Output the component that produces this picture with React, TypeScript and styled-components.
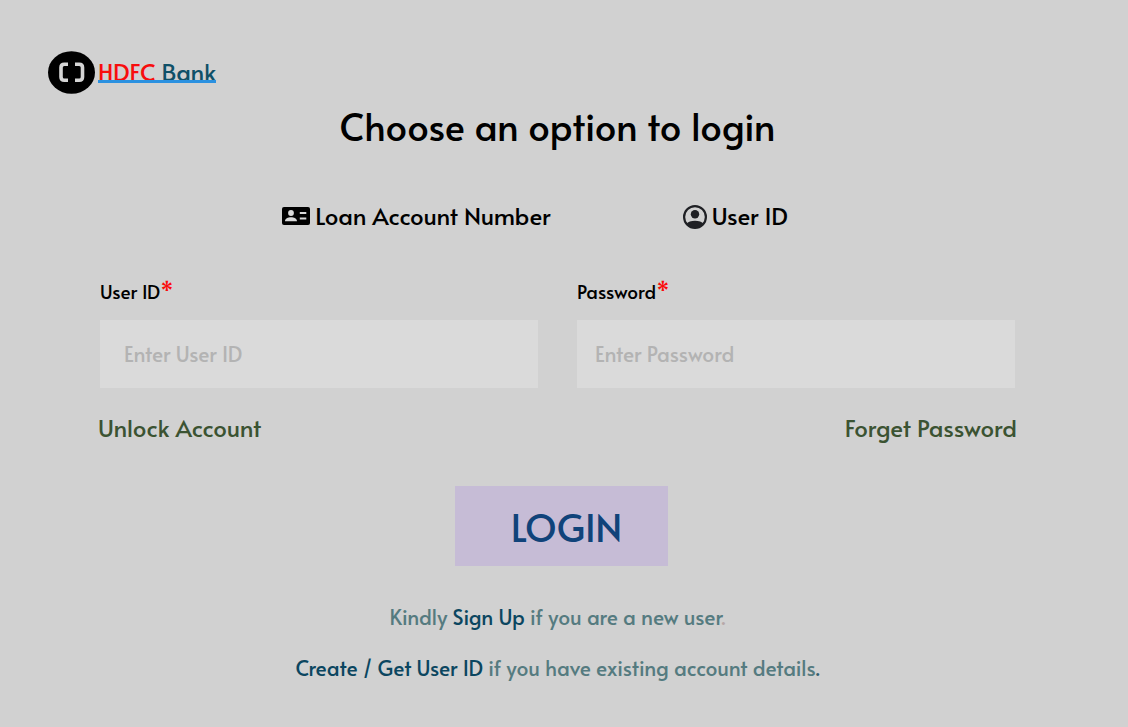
import React from "react";
import styled, { createGlobalStyle } from "styled-components";

const GlobalStyle = createGlobalStyle`
  *, *::before, *::after { box-sizing: border-box; }
  body {
    margin: 0;
    background: #d1d1d1;
    color: #000;
    font-family: Alata, Lato, "Open Sans", sans-serif;
    font-weight: 500;
  }
`;

const Page = styled.main`
  min-height: 100vh;
  padding: 48px 48px 32px;
`;

const Brand = styled.a`
  display: inline-flex;
  align-items: center;
  gap: 3px;
  height: 48px;
  color: #0f5068;
  font-size: 24px;
  line-height: 22px;
  text-decoration: none;
`;

const BrandName = styled.span`
  position: relative;
  &::after {
    content: "";
    position: absolute;
    right: 0;
    bottom: 0;
    left: 0;
    height: 3px;
    background: #2b91e0;
  }
`;

const BrandAccent = styled.span`
  color: #f80d0d;
`;

const Panel = styled.section`
  padding: 0 65px 0 52px;
`;

const Title = styled.h1`
  margin: 4px 0 0;
  font-size: 38px;
  line-height: 48px;
  font-weight: 500;
  text-align: center;
`;

const Options = styled.div`
  display: flex;
  justify-content: center;
  gap: 132px;
  margin-top: 50px;
  padding-right: 45px;
`;

const Option = styled.button`
  display: flex;
  align-items: center;
  gap: 5px;
  padding: 0;
  border: 0;
  background: none;
  color: #000;
  font: inherit;
  font-size: 24px;
  line-height: 32px;
  cursor: pointer;
`;

const Fields = styled.div`
  display: grid;
  grid-template-columns: 1fr 1fr;
  gap: 39px;
  margin-top: 47px;
`;

const Label = styled.label`
  display: block;
  height: 24px;
  font-size: 19px;
  line-height: 24px;
`;

const Required = styled.span`
  color: #fb0a0a;
  font-size: 21px;
  line-height: 20px;
`;

const Input = styled.input<{ $inset: number }>`
  display: block;
  width: 100%;
  height: 68px;
  margin-top: 17px;
  padding: 0 ${({ $inset }) => $inset}px;
  border: 0;
  border-radius: 0;
  background: #dadada;
  color: #000;
  font: inherit;
  font-size: 21px;
  &::placeholder { color: #b3b3b3; opacity: 1; }
`;

const HelpLinks = styled.nav`
  display: flex;
  justify-content: space-between;
  margin: 24px -2px 0;
`;

const HelpLink = styled.a`
  color: #3b5332;
  font-size: 24px;
  line-height: 32px;
  text-decoration: none;
`;

const Actions = styled.div`
  display: flex;
  justify-content: center;
  margin-top: 42px;
  padding-left: 8px;
`;

const LoginButton = styled.button`
  width: 213px;
  height: 80px;
  padding: 3px 0 0 10px;
  border: 0;
  background: #c6bcd6;
  color: #10437a;
  font: inherit;
  font-size: 38px;
  line-height: 48px;
  cursor: pointer;
`;

const Notes = styled.div`
  display: grid;
  gap: 19px;
  margin-top: 35px;
`;

const Note = styled.p`
  margin: 0;
  color: #557b80;
  font-size: 21px;
  line-height: 32px;
  text-align: center;
`;

const NoteLink = styled.a`
  color: #0b4660;
  text-decoration: none;
`;

const FullStop = styled.span<{ $color: string }>`
  color: ${({ $color }) => $color};
`;

const BrandIcon = () => (
  <svg width="47" height="43" viewBox="0 0 47 43" aria-hidden="true">
    <ellipse cx="23.5" cy="21.5" rx="23.5" ry="21.3" />
    <path d="M20 13.200h-3.700q-3.300 0-3.300 3.300v9.500q0 3.300 3.300 3.300h3.700M27 13.200h4.200q3.300 0 3.300 3.300v9.500q0 3.300-3.300 3.300H27" fill="none" stroke="#d5d5d5" strokeWidth="3.600" />
  </svg>
);

const CardIcon = () => (
  <svg width="28" height="20" viewBox="0 0 28 20" aria-hidden="true">
    <rect y="1" width="28" height="18" rx="2" />
    <g fill="#d9d9d9">
      <circle cx="9" cy="7" r="2.900" />
      <path d="M3 15.200c0-5.400 12-5.400 12 0zM17.800 5.900h6.500v2h-6.500zM17.800 11.500h6.500v2h-6.500z" />
    </g>
  </svg>
);

const UserIcon = () => (
  <svg width="24" height="26" viewBox="0 -2 24 26" fill="#1f2024" aria-hidden="true">
    <circle cx="12" cy="12" r="10.900" fill="none" stroke="#1f2024" strokeWidth="2.200" />
    <circle cx="12" cy="9.200" r="4.200" />
    <path d="M3.500 19C6 14.600 18 14.600 20.500 19 16 24.500 8 24.500 3.500 19z" />
  </svg>
);

export default function App() {
  return (
    <>
      <GlobalStyle />
      <Page>
        <Brand href="#">
          <BrandIcon />
          <BrandName><BrandAccent>HDFC</BrandAccent> Bank</BrandName>
        </Brand>
        <Panel>
          <Title>Choose an option to login</Title>
          <Options>
            <Option type="button"><CardIcon />Loan Account Number</Option>
            <Option type="button"><UserIcon />User ID</Option>
          </Options>
          <form onSubmit={(event) => event.preventDefault()}>
            <Fields>
              <div>
                <Label htmlFor="user-id">User ID<Required>*</Required></Label>
                <Input id="user-id" $inset={24} placeholder="Enter User ID" required />
              </div>
              <div>
                <Label htmlFor="password">Password<Required>*</Required></Label>
                <Input id="password" $inset={18} type="password" placeholder="Enter Password" required />
              </div>
            </Fields>
            <HelpLinks>
              <HelpLink href="#">Unlock Account</HelpLink>
              <HelpLink href="#">Forget Password</HelpLink>
            </HelpLinks>
            <Actions>
              <LoginButton type="submit">LOGIN</LoginButton>
            </Actions>
          </form>
          <Notes>
            <Note>Kindly <NoteLink href="#">Sign Up</NoteLink> if you are a new user<FullStop $color="#b7a8a8">.</FullStop></Note>
            <Note><NoteLink href="#">Create / Get User ID</NoteLink> if you have existing account details<FullStop $color="#35606c">.</FullStop></Note>
          </Notes>
        </Panel>
      </Page>
    </>
  );
}
